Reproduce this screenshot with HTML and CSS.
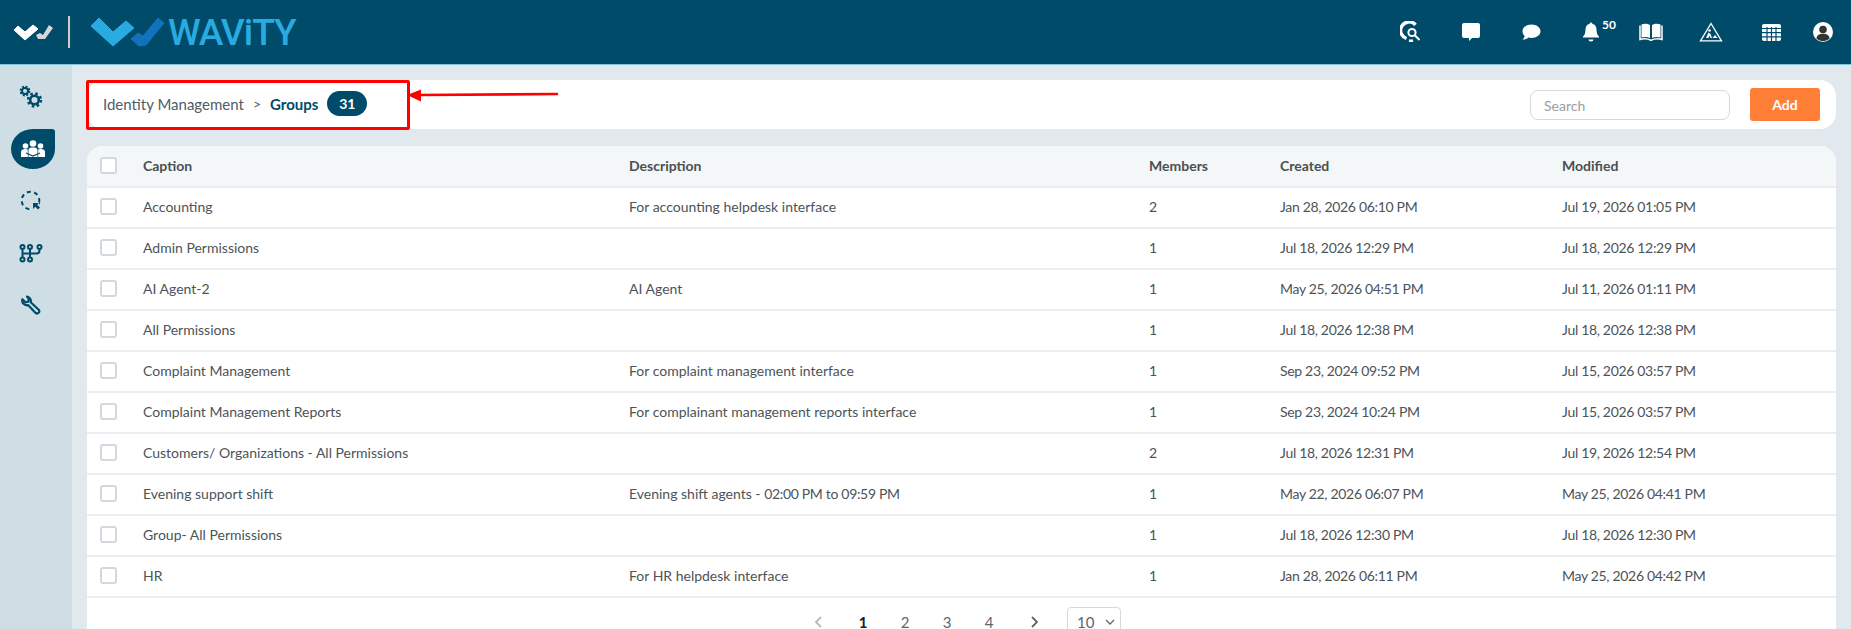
FILE: index.html
```html
<!DOCTYPE html>
<html lang="en">
<head>
    <meta charset="UTF-8">
    <title>Groups - Identity Management</title>
    <link rel="stylesheet" href="styles.css">
</head>
<body>
    <header class="topbar">
        <div class="brand">
            <svg class="brand-mini" width="40" height="17" viewBox="0 0 40 17">
                <polygon points="0,6 4,2 11,8 19,1 24,5 11,16" fill="#fff" stroke="#fff" stroke-linejoin="round"/>
                <polygon points="22,11 26,9 29,11 35,1 39,4 31,15 24,15" fill="#d6d6d6"/>
            </svg>
            <span class="brand-divider"></span>
            <svg class="brand-mark" width="74" height="30" viewBox="0 0 74 30">
                <polygon points="0,9 8,1 22,15 35,4 43,11 22,29" fill="#29abe2" stroke="#29abe2" stroke-linejoin="round"/>
                <polygon points="40,22 47,16 52,19 67,1 73,6 55,28 48,29" fill="#1272bd" stroke="#1272bd" stroke-linejoin="round"/>
            </svg>
            <span class="brand-name">WAViTY</span>
        </div>
        <nav class="top-icons">
            <a class="top-icon"><svg width="22" height="22" viewBox="0 0 22 22"><path d="M15.500 3.800A8.500 8.500 0 1 0 6.500 17.500" fill="none" stroke="#fff" stroke-width="3.400"/><path d="M8 5.500 11.500 8M4 9.500l3.500 3" stroke="#004b69" stroke-width="1.400"/><circle cx="12" cy="11.500" r="3.600" fill="#004b69" stroke="#fff" stroke-width="2"/><path d="M14.800 14.300 19.500 19" stroke="#fff" stroke-width="2"/><path d="M9 19.500a8.500 8.500 0 0 0 4 0" stroke="#fff" stroke-width="2.400" fill="none"/></svg></a>
            <a class="top-icon"><svg width="20" height="20" viewBox="0 0 20 20"><path d="M3 1h14a2 2 0 0 1 2 2v11a2 2 0 0 1-2 2h-6l-3 3v-3H3a2 2 0 0 1-2-2V3a2 2 0 0 1 2-2z" fill="#fff"/></svg></a>
            <a class="top-icon"><svg width="20" height="18" viewBox="0 0 20 18"><path d="M10.500 1.500c5 0 9 2.900 9 6.700s-4 6.700-9 6.700c-1 0-2-.1-2.900-.4-1.500 1.200-3.500 2-6.100 2 1.300-1.200 2-2.500 2.200-3.600C2.200 11.700 1.500 10 1.500 8.200c0-3.800 4-6.700 9-6.700z" fill="#fff"/></svg></a>
            <a class="top-icon bell"><svg width="18" height="20" viewBox="0 0 18 20"><path d="M9 0.500c.8 0 1.300.6 1.300 1.300 2.800.6 4.200 2.900 4.200 5.700 0 4 1.100 5.600 2.500 7v1H1v-1c1.400-1.400 2.500-3 2.500-7 0-2.800 1.400-5.100 4.200-5.700C7.700 1.100 8.200.5 9 .5z" fill="#fff"/><path d="M6.500 17.500h5a2.500 2 0 0 1-5 0z" fill="#fff"/></svg><span class="bell-count">50</span></a>
            <a class="top-icon"><svg width="24" height="20" viewBox="0 0 24 20"><path d="M2.500 2.500C5 1.500 8.500 1.500 11 3v13c-2.500-1.300-6-1.300-8.500-.5zM21.500 2.500C19 1.500 15.500 1.500 13 3v13c2.500-1.300 6-1.300 8.500-.5z" fill="#fff"/><path d="M1 3.500v14c3.500-1 7.500-.8 11 .8 3.500-1.600 7.500-1.800 11-.8v-14" fill="none" stroke="#fff" stroke-width="1.500"/></svg></a>
            <a class="top-icon"><svg width="24" height="20" viewBox="0 0 24 20"><path d="M12 1.500 22.500 18.800h-21z" fill="none" stroke="#fff" stroke-width="1.300"/><circle cx="10.500" cy="8.500" r="1.300" fill="#fff"/><path d="M7 16l2.500-5.500 2 1.500 1.500 4h-1.500l-1-2.500-1 2.500zM13.500 16l2.500-3 2.500 3z" fill="#fff"/></svg></a>
            <a class="top-icon"><svg width="19" height="17" viewBox="0 0 19 17"><rect width="19" height="17" rx="2" fill="#fff"/><path d="M0 4.500h19M0 8.700h19M0 12.800h19M5 3v14M9.500 3v14M14 3v14" stroke="#004b69" stroke-width="1.200"/></svg></a>
            <a class="top-icon"><svg width="20" height="20" viewBox="0 0 20 20"><circle cx="10" cy="10" r="10" fill="#fff"/><circle cx="10" cy="7.500" r="3.800" fill="#333"/><path d="M3.500 16.800c0-3.500 2.500-5 6.500-5s6.500 1.500 6.500 5a10 10 0 0 1-13 0z" fill="#333"/></svg></a>
        </nav>
    </header>

    <div class="layout">
        <aside class="sidebar">
            <a class="side-item">
                <svg width="24" height="24" viewBox="0 0 24 24" fill="none" stroke="#004b69">
                    <circle cx="6" cy="6" r="3" stroke-width="2"/>
                    <circle cx="6" cy="6" r="4.400" stroke-width="2" stroke-dasharray="2 1.450"/>
                    <circle cx="15.500" cy="15" r="4.300" stroke-width="2.600"/>
                    <circle cx="15.500" cy="15" r="6.400" stroke-width="2.600" stroke-dasharray="2.500 2.530"/>
                </svg>
            </a>
            <a class="side-item active">
                <svg width="24" height="18" viewBox="0 0 24 18">
                    <circle cx="12" cy="3.500" r="3.300" fill="#fff"/>
                    <circle cx="4.500" cy="6" r="2.800" fill="#fff"/>
                    <circle cx="19.500" cy="6" r="2.800" fill="#fff"/>
                    <path d="M0 17v-5c0-2 1.500-3 4.500-3 1 0 1.700.2 2.300.5v7.500zM24 17v-5c0-2-1.500-3-4.500-3-1 0-1.700.2-2.300.5v7.500z" fill="#fff"/>
                    <path d="M7.500 17V10c0-2 2-2.500 4.500-2.500S16.500 8 16.500 10v7z" fill="#fff"/>
                    <path d="M5 13l7 3 7-3" fill="none" stroke="#004b69" stroke-width="1.200"/>
                </svg>
            </a>
            <a class="side-item">
                <svg width="22" height="22" viewBox="0 0 22 22">
                    <circle cx="10.500" cy="10.500" r="8.800" fill="none" stroke="#004b69" stroke-width="2" stroke-dasharray="4 3.500"/>
                    <path d="M12 12h7v9H12z" fill="#cfdee4"/>
                    <path d="M13 13h6l-1.800 1.800L20 17.600 18 19.600l-2.800-2.800L13 19z" fill="#004b69"/>
                </svg>
            </a>
            <a class="side-item">
                <svg width="24" height="20" viewBox="0 0 24 20" fill="none" stroke="#004b69" stroke-width="2">
                    <circle cx="3.500" cy="4" r="2"/>
                    <circle cx="11" cy="4" r="2"/>
                    <circle cx="20.500" cy="4" r="2"/>
                    <circle cx="3.500" cy="16.500" r="2"/>
                    <circle cx="11" cy="16.500" r="2"/>
                    <path d="M3.500 6v8.500M11 6v8.500M20.500 6v1.500a3 3 0 0 1-3 3h-14"/>
                </svg>
            </a>
            <a class="side-item">
                <svg width="20" height="20" viewBox="0 0 20 20">
                    <path d="M6 1.500a4.800 4.800 0 0 1 2.800 1.600 4.600 4.600 0 0 1 .9 4.200l8 7.500a2.200 2.200 0 0 1-3.100 3.100L7.100 10.100a4.700 4.700 0 0 1-5.700-5.900L4.600 7.300l2.600-.6.600-2.500z" fill="none" stroke="#004b69" stroke-width="2.200" stroke-linejoin="round"/>
                </svg>
            </a>
        </aside>

        <main class="content">
            <section class="toolbar">
                <div class="crumbs">
                    <span class="crumb">Identity Management</span>
                    <span class="crumb-sep">&gt;</span>
                    <span class="crumb-current">Groups</span>
                    <span class="count-pill">31</span>
                </div>
                <div class="toolbar-actions">
                    <input class="search" type="text" placeholder="Search">
                    <button class="add-btn">Add</button>
                </div>
            </section>

            <section class="table-card">
                <table class="groups">
                    <thead>
                        <tr>
                            <th class="col-check"><span class="check"></span></th>
                            <th class="col-caption">Caption</th>
                            <th class="col-desc">Description</th>
                            <th class="col-members">Members</th>
                            <th class="col-created">Created</th>
                            <th>Modified</th>
                        </tr>
                    </thead>
                    <tbody>
                        <tr><td><span class="check"></span></td><td>Accounting</td><td>For accounting helpdesk interface</td><td>2</td><td>Jan 28, 2026 06:10 PM</td><td>Jul 19, 2026 01:05 PM</td></tr>
                        <tr><td><span class="check"></span></td><td>Admin Permissions</td><td></td><td>1</td><td>Jul 18, 2026 12:29 PM</td><td>Jul 18, 2026 12:29 PM</td></tr>
                        <tr><td><span class="check"></span></td><td>AI Agent-2</td><td>AI Agent</td><td>1</td><td>May 25, 2026 04:51 PM</td><td>Jul 11, 2026 01:11 PM</td></tr>
                        <tr><td><span class="check"></span></td><td>All Permissions</td><td></td><td>1</td><td>Jul 18, 2026 12:38 PM</td><td>Jul 18, 2026 12:38 PM</td></tr>
                        <tr><td><span class="check"></span></td><td>Complaint Management</td><td>For complaint management interface</td><td>1</td><td>Sep 23, 2024 09:52 PM</td><td>Jul 15, 2026 03:57 PM</td></tr>
                        <tr><td><span class="check"></span></td><td>Complaint Management Reports</td><td>For complainant management reports interface</td><td>1</td><td>Sep 23, 2024 10:24 PM</td><td>Jul 15, 2026 03:57 PM</td></tr>
                        <tr><td><span class="check"></span></td><td>Customers/ Organizations - All Permissions</td><td></td><td>2</td><td>Jul 18, 2026 12:31 PM</td><td>Jul 19, 2026 12:54 PM</td></tr>
                        <tr><td><span class="check"></span></td><td>Evening support shift</td><td>Evening shift agents - <span class="nums">02:00 PM to 09:59 PM</span></td><td>1</td><td>May 22, 2026 06:07 PM</td><td>May 25, 2026 04:41 PM</td></tr>
                        <tr><td><span class="check"></span></td><td>Group- All Permissions</td><td></td><td>1</td><td>Jul 18, 2026 12:30 PM</td><td>Jul 18, 2026 12:30 PM</td></tr>
                        <tr><td><span class="check"></span></td><td>HR</td><td>For HR helpdesk interface</td><td>1</td><td>Jan 28, 2026 06:11 PM</td><td>May 25, 2026 04:42 PM</td></tr>
                    </tbody>
                </table>
                <div class="pager">
                    <span class="pager-arrow muted">
                        <svg width="9" height="12" viewBox="0 0 9 12"><polyline points="7,1 2,6 7,11" fill="none" stroke="#b4bac0" stroke-width="1.800"/></svg>
                    </span>
                    <span class="page current">1</span>
                    <span class="page">2</span>
                    <span class="page">3</span>
                    <span class="page">4</span>
                    <span class="pager-arrow">
                        <svg width="9" height="12" viewBox="0 0 9 12"><polyline points="2,1 7,6 2,11" fill="none" stroke="#5b6670" stroke-width="1.800"/></svg>
                    </span>
                    <span class="page-size">10
                        <svg width="10" height="6" viewBox="0 0 10 6"><polyline points="1,1 5,5 9,1" fill="none" stroke="#5b6670" stroke-width="1.300"/></svg>
                    </span>
                </div>
            </section>
        </main>
    </div>

    <!-- red annotation drawn over the breadcrumb -->
    <div class="callout-box"></div>
    <svg class="callout-arrow" width="155" height="18" viewBox="0 0 155 18">
        <polygon points="2,9 16,3.500 16,15.500" fill="#f00"/>
        <path d="M14 9 152 8" stroke="#f00" stroke-width="2.600" stroke-linecap="round"/>
    </svg>
</body>
</html>
```

FILE: styles.css
```css
* {
    box-sizing: border-box;
}
html, body {
    height: 100%;
}
body {
    margin: 0;
    overflow: hidden;
    font-family: 'Lato', 'Liberation Sans', sans-serif;
    font-size: 14px;
    color: #4d5358;
    background-color: #e1e9ef;
}

/* top bar */
.topbar {
    display: flex;
    justify-content: space-between;
    align-items: center;
    height: 65px;
    padding-right: 14px;
    background-color: #004b69;
    border-bottom: 1px solid #7fc3da;
}
.brand {
    display: flex;
    align-items: center;
    padding-left: 14px;
}
.brand-divider {
    width: 2px;
    height: 32px;
    margin: 0 21px 0 14px;
    background-color: #c9ccce;
}
.brand-mark {
    margin-right: 3px;
}
.brand-name {
    font-family: 'Roboto', sans-serif;
    font-size: 37px;
    font-weight: 500;
    line-height: 1;
    letter-spacing: -1px;
    color: #29abe2;
}
.top-icons {
    display: flex;
    gap: 32px;
}
.top-icon {
    position: relative;
    display: flex;
    justify-content: center;
    align-items: center;
    width: 28px;
    height: 24px;
}
.top-icon:last-child {
    margin-left: -8px;
}
.bell-count {
    position: absolute;
    top: -3px;
    left: 25px;
    font-size: 12px;
    font-weight: 700;
    color: #fff;
}

/* layout */
.layout {
    display: flex;
    height: 564px;
}
.sidebar {
    display: flex;
    flex-direction: column;
    align-items: center;
    gap: 12px;
    flex: 0 0 72px;
    padding: 12px 7px 0 0;
    background-color: #cfdee4;
}
.side-item {
    display: flex;
    justify-content: center;
    align-items: center;
    width: 44px;
    height: 40px;
    padding-right: 3px;
}
.side-item.active {
    padding-right: 0;
    background-color: #004b69;
    border-radius: 50% 3px 50% 50%;
}
.content {
    flex: 1;
    padding: 15px 15px 0;
}

/* breadcrumb row */
.toolbar {
    display: flex;
    justify-content: space-between;
    align-items: center;
    height: 49px;
    margin-bottom: 17px;
    padding: 0 16px;
    background-color: #fff;
    border-radius: 16px;
}
.crumbs {
    display: flex;
    align-items: center;
    margin-bottom: 2px;
    font-size: 15px;
    color: #4f5d68;
}
.crumb-sep {
    margin: 0 9px;
    font-size: 14px;
}
.crumb-current {
    font-weight: 700;
    color: #004b69;
}
.count-pill {
    margin-left: 9px;
    width: 40px;
    height: 25px;
    line-height: 25px;
    border-radius: 13px;
    text-align: center;
    font-size: 14px;
    font-weight: 700;
    color: #fff;
    background-color: #004b69;
}
.toolbar-actions {
    display: flex;
    align-items: center;
    gap: 20px;
}
.search {
    width: 200px;
    height: 30px;
    padding: 2px 13px 0;
    border: 1px solid #d5d8dc;
    border-radius: 8px;
    font-family: inherit;
    font-size: 14px;
}
.search::placeholder {
    color: #9a9da0;
}
.add-btn {
    width: 70px;
    height: 33px;
    border: 0;
    border-radius: 3px;
    font-family: inherit;
    font-size: 14px;
    font-weight: 700;
    color: #fff;
    background-color: #ff7f36;
}

/* table */
.table-card {
    background-color: #fff;
    border-radius: 16px 16px 0 0;
    overflow: hidden;
}
.groups {
    width: 100%;
    table-layout: fixed;
    border-collapse: collapse;
}
.groups th, .groups td {
    height: 41px;
    padding: 0 0 2px;
    text-align: left;
    border-bottom: 2px solid #e9eef2;
}
.groups th {
    font-weight: 700;
    color: #4a4f54;
    background-color: #f3f7f8;
}
/* digits in the dates run a bit narrower than the installed Lato */
.groups td:nth-child(n+5), .nums {
    letter-spacing: -0.32px;
}
.col-check { width: 56px; }
.col-caption { width: 486px; }
.col-desc { width: 520px; }
.col-members { width: 131px; }
.col-created { width: 282px; }
.check {
    display: block;
    width: 17px;
    height: 17px;
    margin-left: 13px;
    background-color: #fff;
    border: 2px solid #d3d8df;
    border-radius: 3px;
}

/* pagination */
.pager {
    display: flex;
    justify-content: center;
    align-items: center;
    height: 48px;
    padding-right: 8px;
    font-size: 15px;
    color: #5b6670;
}
.pager-arrow {
    width: 48px;
    text-align: center;
}
.page {
    width: 42px;
    text-align: center;
}
.page.current {
    font-weight: 700;
    color: #12202b;
}
.page-size {
    display: flex;
    align-items: center;
    gap: 11px;
    width: 54px;
    height: 30px;
    margin-left: 9px;
    padding-left: 9px;
    border: 1px solid #d5d8dc;
    border-radius: 4px;
}

/* annotation */
.callout-box {
    position: absolute;
    left: 86px;
    top: 80px;
    width: 324px;
    height: 50px;
    border: 3px solid #f00;
    border-radius: 2px;
}
.callout-arrow {
    position: absolute;
    left: 405px;
    top: 86px;
}
```
